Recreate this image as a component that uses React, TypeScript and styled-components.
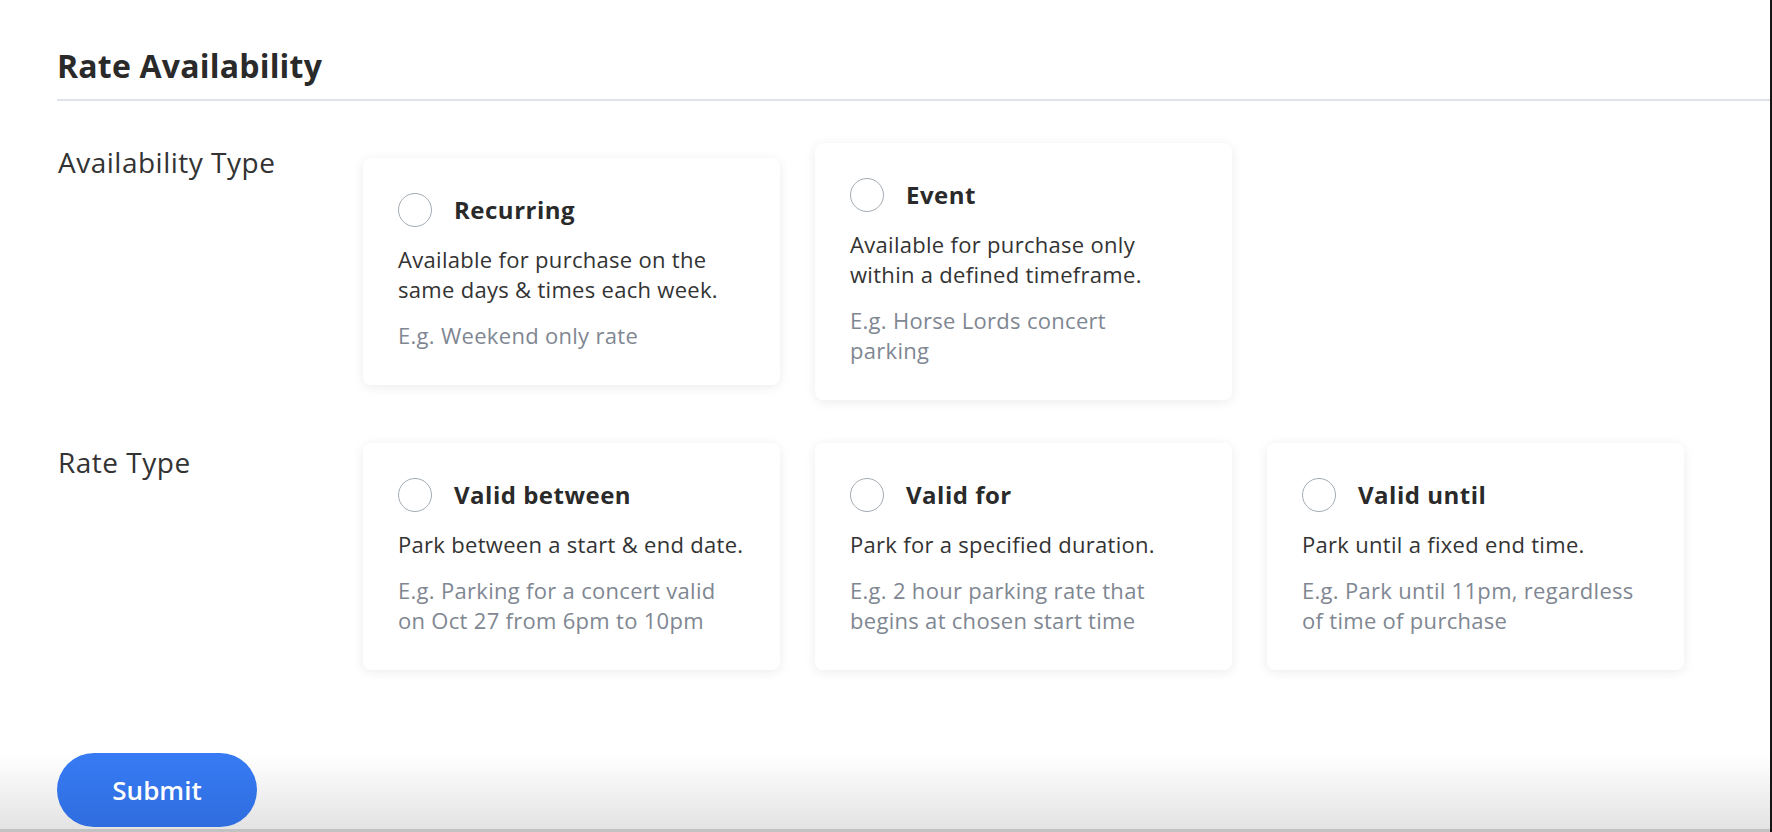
import React from 'react';
import styled, { createGlobalStyle } from 'styled-components';

const GlobalStyle = createGlobalStyle`
  html, body {
    margin: 0;
    padding: 0;
    background: #fff;
  }
  body {
    font-family: "Open Sans", "Liberation Sans", sans-serif;
    color: #2d2d2d;
  }
`;

type Option = {
  title: string;
  desc: string;
  example: string;
};

// line breaks follow the design so the copy wraps the same way
const availabilityOptions: Option[] = [
  {
    title: 'Recurring',
    desc: 'Available for purchase on the\nsame days & times each week.',
    example: 'E.g. Weekend only rate',
  },
  {
    title: 'Event',
    desc: 'Available for purchase only\nwithin a defined timeframe.',
    example: 'E.g. Horse Lords concert\nparking',
  },
];

const rateOptions: Option[] = [
  {
    title: 'Valid between',
    desc: 'Park between a start & end date.',
    example: 'E.g. Parking for a concert valid\non Oct 27 from 6pm to 10pm',
  },
  {
    title: 'Valid for',
    desc: 'Park for a specified duration.',
    example: 'E.g. 2 hour parking rate that\nbegins at chosen start time',
  },
  {
    title: 'Valid until',
    desc: 'Park until a fixed end time.',
    example: 'E.g. Park until 11pm, regardless\nof time of purchase',
  },
];

const OptionCard = ({ title, desc, example }: Option) => (
  <Card>
    <CardHead>
      <Radio />
      <CardTitle>{title}</CardTitle>
    </CardHead>
    <CardDesc>{desc}</CardDesc>
    <CardExample>{example}</CardExample>
  </Card>
);

const App = () => {
  return (
    <Page>
      <GlobalStyle />
      <Header>
        <Title>Rate Availability</Title>
      </Header>
      <Content>
        <Row>
          <Label>Availability Type</Label>
          <CardGroup>
            {availabilityOptions.map((item) => (
              <OptionCard key={item.title} {...item} />
            ))}
          </CardGroup>
        </Row>
        <Row>
          <Label>Rate Type</Label>
          <CardGroup>
            {rateOptions.map((item) => (
              <OptionCard key={item.title} {...item} />
            ))}
          </CardGroup>
        </Row>
      </Content>
      <Footer>
        <SubmitButton type="button">Submit</SubmitButton>
      </Footer>
    </Page>
  );
};

export default App;

const Page = styled.div`
  height: 832px;
  box-sizing: border-box;
  display: flex;
  flex-direction: column;
  border-right: 2px solid #151515;
  overflow: hidden;
`;

const Header = styled.div`
  margin-left: 57px;
  padding-top: 47px;
  padding-bottom: 14px;
  border-bottom: 2px solid #dfe3e8;
`;

const Title = styled.h1`
  margin: 0;
  font-size: 32px;
  line-height: 1.2;
  font-weight: 700;
  letter-spacing: 0.2px;
  color: #2a2a2a;
`;

const Content = styled.div`
  display: flex;
  flex-direction: column;
  gap: 43px;
  padding: 42px 0 0 58px;
`;

const Row = styled.div`
  display: flex;
`;

const Label = styled.div`
  width: 305px;
  flex-shrink: 0;
  padding-top: 2px;
  font-size: 28px;
  line-height: 34px;
  letter-spacing: 0.5px;
  color: #333;
`;

const CardGroup = styled.div`
  display: flex;
  align-items: center;
  gap: 35px;
`;

const Card = styled.div`
  width: 417px;
  box-sizing: border-box;
  padding: 35px 20px 35px 35px;
  background: #fff;
  border-radius: 8px;
  box-shadow: 0 2px 12px rgba(0, 0, 0, 0.08);
`;

const CardHead = styled.div`
  display: flex;
  align-items: center;
  gap: 22px;
`;

const Radio = styled.span`
  width: 34px;
  height: 34px;
  box-sizing: border-box;
  border-radius: 50%;
  border: 1.5px solid #a3abb3;
  flex-shrink: 0;
`;

const CardTitle = styled.div`
  font-size: 24px;
  line-height: 30px;
  font-weight: 700;
  letter-spacing: 0.5px;
  color: #2a2a2a;
`;

const CardDesc = styled.p`
  margin: 17px 0 0;
  font-size: 22px;
  line-height: 30px;
  letter-spacing: 0.3px;
  white-space: pre-line;
  color: #333;
`;

const CardExample = styled(CardDesc)`
  margin-top: 16px;
  color: #7f8792;
`;

const Footer = styled.div`
  margin-top: auto;
  height: 87px;
  box-sizing: border-box;
  padding: 8px 0 0 57px;
  background: linear-gradient(to bottom, #ffffff 0%, #ffffff 12%, #e3e3e3 100%);
  border-bottom: 3px solid #c2c2c2;
`;

const SubmitButton = styled.button`
  width: 200px;
  height: 74px;
  border: none;
  border-radius: 37px;
  background: linear-gradient(to bottom, #377bf4, #2f6ddf);
  color: #fff;
  font-family: "Open Sans", "Liberation Sans", sans-serif;
  font-size: 26px;
  font-weight: 600;
  cursor: pointer;
`;
